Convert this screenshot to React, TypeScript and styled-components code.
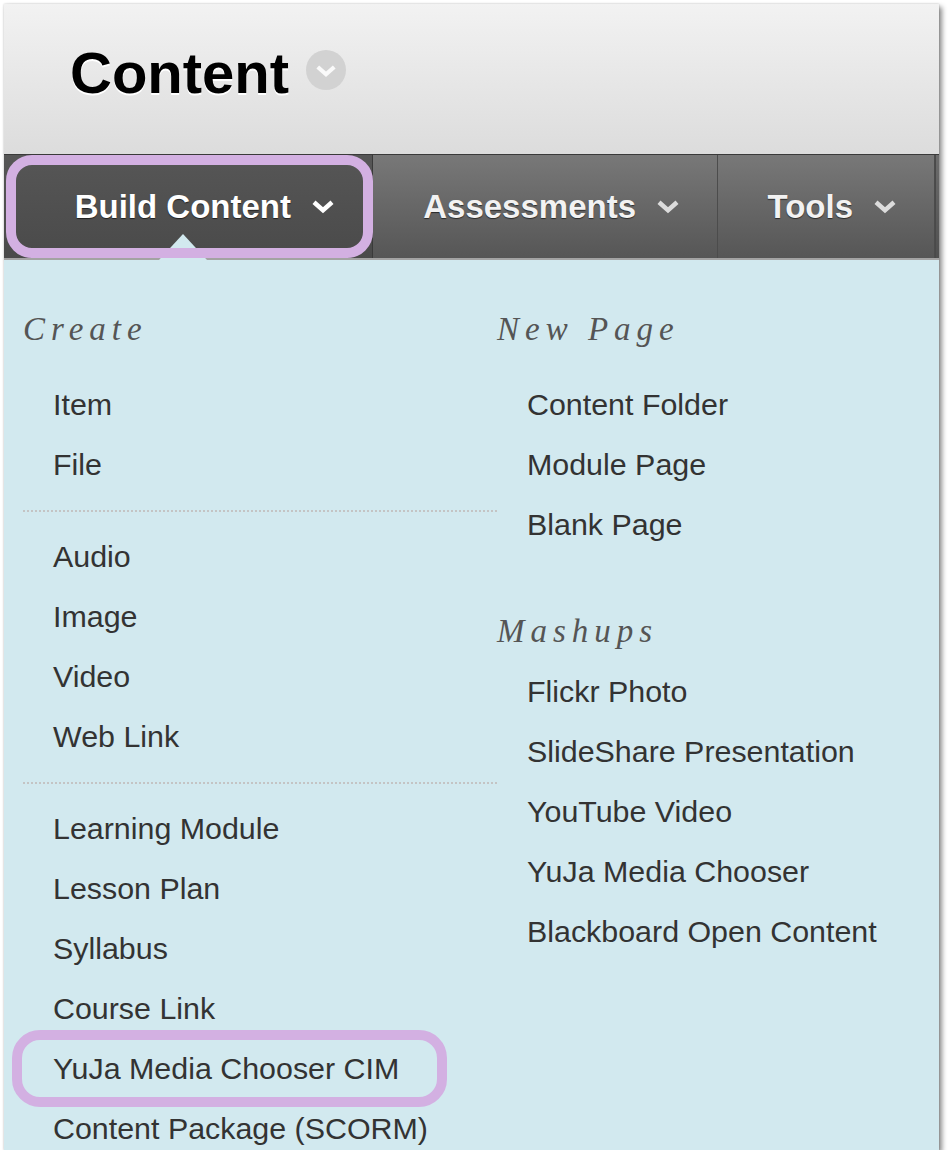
import React from 'react';
import styled, { createGlobalStyle } from 'styled-components';

const GlobalStyle = createGlobalStyle`
  html, body {
    margin: 0;
    padding: 0;
    background: #ffffff;
  }
  body {
    font-family: "Liberation Sans", Arial, sans-serif;
  }
`;

const createItems = [
  ['Item', 'File'],
  ['Audio', 'Image', 'Video', 'Web Link'],
  ['Learning Module', 'Lesson Plan', 'Syllabus', 'Course Link', 'YuJa Media Chooser CIM', 'Content Package (SCORM)'],
];

const newPageItems = ['Content Folder', 'Module Page', 'Blank Page'];
const mashupItems = ['Flickr Photo', 'SlideShare Presentation', 'YouTube Video', 'YuJa Media Chooser', 'Blackboard Open Content'];

const Chevron = ({ color = '#fff', size = 24 }: { color?: string; size?: number }) => (
  <svg width={size} height={size * 0.6} viewBox="0 0 24 14">
    <polyline points="3,3 12,11 21,3" fill="none" stroke={color} strokeWidth="4.5" />
  </svg>
);

export default function App() {
  return (
    <>
      <GlobalStyle />
      <Frame>
        <Header>
          <Title>Content</Title>
          <TitleMenu>
            <Chevron color="#fafafa" size={22} />
          </TitleMenu>
        </Header>

        <NavBar>
          <Tab $width={369} $active $marked>
            <TabLabel $active>Build Content</TabLabel>
            <Chevron />
          </Tab>
          <Tab $width={345}>
            <TabLabel>Assessments</TabLabel>
            <Chevron color="#dcdcdc" />
          </Tab>
          <Tab $width={217}>
            <TabLabel>Tools</TabLabel>
            <Chevron color="#dcdcdc" />
          </Tab>
          <NavFiller />
        </NavBar>

        <Panel>
          <Column>
            <Heading $below={15}>Create</Heading>
            {createItems.map((group, i) => (
              <React.Fragment key={i}>
                {i > 0 && <Divider />}
                {group.map((label) => (
                  <MenuItem key={label} $marked={label === 'YuJa Media Chooser CIM'}>
                    {label}
                  </MenuItem>
                ))}
              </React.Fragment>
            ))}
          </Column>
          <Column>
            <Heading $below={15}>New Page</Heading>
            {newPageItems.map((label) => (
              <MenuItem key={label}>{label}</MenuItem>
            ))}
            <Heading $above={47}>Mashups</Heading>
            {mashupItems.map((label) => (
              <MenuItem key={label}>{label}</MenuItem>
            ))}
          </Column>
        </Panel>
      </Frame>
    </>
  );
}

const Frame = styled.div`
  margin: 4px 0 0 4px;
  width: 935px;
  height: 1146px;
  display: flex;
  flex-direction: column;
  overflow: hidden;
  box-shadow: 3px 3px 5px rgba(0, 0, 0, 0.45), 0 0 2px rgba(0, 0, 0, 0.2);
`;

const Header = styled.div`
  flex-shrink: 0;
  height: 150px;
  box-sizing: border-box;
  padding: 40px 0 0 66px;
  display: flex;
  align-items: flex-start;
  gap: 17px;
  background: linear-gradient(#f2f2f2, #dcdcdc);
`;

const Title = styled.h1`
  margin: 0;
  font-size: 58px;
  line-height: 58px;
  font-weight: 700;
  color: #000;
  text-shadow: 0 2px 0 #fff;
`;

const TitleMenu = styled.div`
  width: 40px;
  height: 40px;
  margin-top: 6px;
  border-radius: 50%;
  background: #d2d2d2;
  display: flex;
  align-items: center;
  justify-content: center;
  padding-top: 2px;
  box-sizing: border-box;
`;

const NavBar = styled.div`
  flex-shrink: 0;
  display: flex;
  height: 106px;
  box-sizing: border-box;
  border-top: 1px solid #3a3a3a;
  border-bottom: 2px solid #a3a3a3;
  background: #3e3e3e;
`;

const Tab = styled.div<{ $width: number; $active?: boolean; $marked?: boolean }>`
  position: relative;
  width: ${(p) => p.$width}px;
  flex-shrink: 0;
  box-sizing: border-box;
  display: flex;
  align-items: center;
  justify-content: flex-end;
  gap: 20px;
  padding: 0 37px 0 0;
  border-right: 1px solid ${(p) => (p.$active ? '#3a3a3a' : '#4c4c4c')};
  background: ${(p) =>
    p.$active ? 'linear-gradient(#565656, #4a4a4a)' : 'linear-gradient(#787878, #565656)'};

  ${(p) =>
    p.$marked &&
    `
    &::before {
      content: "";
      position: absolute;
      left: 155px;
      bottom: -2px;
      width: 0;
      height: 0;
      border-left: 24px solid transparent;
      border-right: 24px solid transparent;
      border-bottom: 26px solid #d2e9ef;
    }
    &::after {
      content: "";
      position: absolute;
      left: 2px;
      top: 0;
      width: 367px;
      height: 103px;
      box-sizing: border-box;
      border: 10px solid #d3b0e2;
      border-radius: 26px;
    }
  `}
`;

const TabLabel = styled.span<{ $active?: boolean }>`
  font-size: 33px;
  font-weight: 700;
  color: ${(p) => (p.$active ? '#ffffff' : '#f2f2f2')};
  text-shadow: 0 1px 1px rgba(0, 0, 0, 0.6);
`;

const NavFiller = styled.div`
  flex: 1;
  background: linear-gradient(#6c6c6c, #505050);
  border-left: 1px solid #4a4a4a;
`;

const Panel = styled.div`
  flex: 1;
  display: grid;
  grid-template-columns: 474px 1fr;
  align-items: start;
  padding: 39px 0 0 19px;
  background: #d2e9ef;
`;

const Column = styled.div`
  display: flex;
  flex-direction: column;
`;

const Heading = styled.h2<{ $above?: number; $below?: number }>`
  margin: ${(p) => p.$above ?? 0}px 0 ${(p) => p.$below ?? 0}px;
  font-family: "Liberation Serif", "Times New Roman", serif;
  font-style: italic;
  font-weight: 400;
  font-size: 33px;
  line-height: 60px;
  letter-spacing: 6px;
  color: #555;
`;

const MenuItem = styled.div<{ $marked?: boolean }>`
  position: relative;
  padding-left: 30px;
  font-size: 30.4px;
  line-height: 60px;
  color: #333;
  white-space: nowrap;

  ${(p) =>
    p.$marked &&
    `
    &::after {
      content: "";
      position: absolute;
      left: -11px;
      top: -8px;
      width: 435px;
      height: 77px;
      box-sizing: border-box;
      border: 10px solid #d3b0e2;
      border-radius: 28px;
    }
  `}
`;

const Divider = styled.div`
  margin: 16px 0 14px;
  border-top: 2px dotted #c4c4c4;
`;
